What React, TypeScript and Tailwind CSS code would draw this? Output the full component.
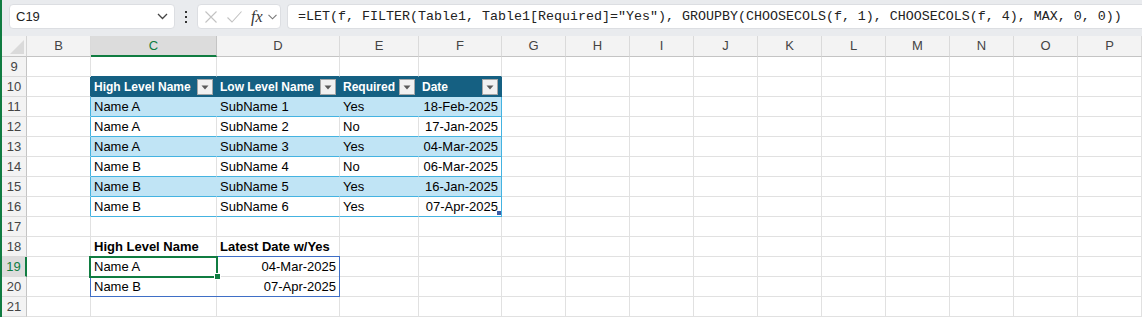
import React from 'react';

const FONT = { fontFamily: '"Liberation Sans", Arial, sans-serif' };

const COLS = [
  { id: 'B', w: 'w-[64px]' },
  { id: 'C', w: 'w-[126px]' },
  { id: 'D', w: 'w-[123px]' },
  { id: 'E', w: 'w-[79px]' },
  { id: 'F', w: 'w-[83px]' },
  { id: 'G', w: 'w-[64px]' },
  { id: 'H', w: 'w-[64px]' },
  { id: 'I', w: 'w-[64px]' },
  { id: 'J', w: 'w-[64px]' },
  { id: 'K', w: 'w-[64px]' },
  { id: 'L', w: 'w-[64px]' },
  { id: 'M', w: 'w-[64px]' },
  { id: 'N', w: 'w-[64px]' },
  { id: 'O', w: 'w-[64px]' },
  { id: 'P', w: 'w-[64px]' },
];

const TABLE_COLS = ['C', 'D', 'E', 'F'];
const HEADERS = ['High Level Name', 'Low Level Name', 'Required', 'Date'];
const DATA = [
  ['Name A', 'SubName 1', 'Yes', '18-Feb-2025'],
  ['Name A', 'SubName 2', 'No', '17-Jan-2025'],
  ['Name A', 'SubName 3', 'Yes', '04-Mar-2025'],
  ['Name B', 'SubName 4', 'No', '06-Mar-2025'],
  ['Name B', 'SubName 5', 'Yes', '16-Jan-2025'],
  ['Name B', 'SubName 6', 'Yes', '07-Apr-2025'],
];
const ROWS = [9, 10, 11, 12, 13, 14, 15, 16, 17, 18, 19, 20, 21];

type Cell = { text?: string; right?: boolean; bold?: boolean; dropdown?: boolean; cls: string };

const DropButton = () => (
  <div className="w-[16px] h-[16px] shrink-0 bg-[#f1f1f1] border border-[#a6a6a6] flex items-center justify-center">
    <svg width="8" height="5" viewBox="0 0 8 5">
      <path d="M0.5 0.5 H7.5 L4 4.5 Z" fill="#5a5a5a" />
    </svg>
  </div>
);

function getCell(r: number, c: string): Cell {
  const ti = TABLE_COLS.indexOf(c);
  const grid = 'border-r-[#e1e1e1] border-b-[#e1e1e1]';
  if (c === 'B') {
    if (r === 10) return { cls: 'border-r-[#156082] border-b-[#e1e1e1]' };
    if (r >= 11 && r <= 16) return { cls: 'border-r-[#44b3e1] border-b-[#e1e1e1]' };
    return { cls: grid };
  }
  if (ti >= 0) {
    if (r === 9) return { cls: 'border-r-[#e1e1e1] border-b-[#156082]' };
    if (r === 10)
      return {
        text: HEADERS[ti],
        bold: true,
        dropdown: true,
        cls: 'bg-[#156082] text-white border-r-[#156082] border-b-[#156082] pr-[1px]',
      };
    if (r >= 11 && r <= 16) {
      const band = (r - 11) % 2 === 0;
      const last = c === 'F';
      const rightCls = last ? 'border-r-[#44b3e1]' : band ? 'border-r-[#c0e4f5]' : 'border-r-[#e1e1e1]';
      return {
        text: DATA[r - 11][ti],
        right: c === 'F',
        cls: `${band ? 'bg-[#c0e4f5]' : 'bg-white'} ${rightCls} border-b-[#44b3e1]`,
      };
    }
    if (r === 18 && c === 'C') return { text: 'High Level Name', bold: true, cls: grid };
    if (r === 18 && c === 'D') return { text: 'Latest Date w/Yes', bold: true, cls: grid };
    if (r === 19 && c === 'C') return { text: 'Name A', cls: grid };
    if (r === 19 && c === 'D') return { text: '04-Mar-2025', right: true, cls: grid };
    if (r === 20 && c === 'C') return { text: 'Name B', cls: grid };
    if (r === 20 && c === 'D') return { text: '07-Apr-2025', right: true, cls: grid };
  }
  return { cls: grid };
}

const FormulaBar = () => (
  <div className="h-[36px] bg-[#e9ebee] flex items-start pt-[4px]">
    {/* Name box */}
    <div className="ml-[7px] w-[166px] h-[25px] bg-white rounded-[4px] border border-[#dcdee2] flex items-center justify-between pl-[6px] pr-[6px]">
      <span className="text-[13px] text-[#222]">C19</span>
      <svg width="11" height="7" viewBox="0 0 11 7">
        <path d="M1 1 L5.5 5.5 L10 1" fill="none" stroke="#444" strokeWidth="1.3" />
      </svg>
    </div>
    <div className="w-[22px] h-[25px] flex flex-col items-center justify-center gap-[3px]">
      <div className="w-[2px] h-[2px] bg-[#333]" />
      <div className="w-[2px] h-[2px] bg-[#333]" />
      <div className="w-[2px] h-[2px] bg-[#333]" />
    </div>
    {/* Function buttons */}
    <div className="w-[84px] h-[25px] bg-white rounded-[4px] border border-[#dcdee2] flex items-center pl-[6px]">
      <svg width="12" height="12" viewBox="0 0 12 12" className="ml-[1px]">
        <path d="M0.5 0.5 L11.5 11.5 M11.5 0.5 L0.5 11.5" stroke="#c2c2c2" strokeWidth="1.1" />
      </svg>
      <svg width="15" height="12" viewBox="0 0 15 12" className="ml-[10px]">
        <path d="M0.5 6.5 L5 11 L14.5 0.5" fill="none" stroke="#c2c2c2" strokeWidth="1.1" />
      </svg>
      <span
        className="ml-[9px] text-[16px] italic text-[#333] leading-none"
        style={{ fontFamily: '"Liberation Serif", "Times New Roman", serif' }}
      >
        fx
      </span>
      <svg width="9" height="6" viewBox="0 0 9 6" className="ml-[5px]">
        <path d="M0.5 0.8 L4.5 4.8 L8.5 0.8" fill="none" stroke="#777" strokeWidth="1.1" />
      </svg>
    </div>
    {/* Formula */}
    <div className="ml-[6px] flex-1 h-[25px] bg-white rounded-l-[4px] border border-r-0 border-[#dcdee2] flex items-center pl-[10px]">
      <span
        className="text-[13.33px] text-[#222] whitespace-pre"
        style={{ fontFamily: '"Liberation Mono", "Courier New", monospace' }}
      >
        =LET(f, FILTER(Table1, Table1[Required]="Yes"), GROUPBY(CHOOSECOLS(f, 1), CHOOSECOLS(f, 4), MAX, 0, 0))
      </span>
    </div>
  </div>
);

const ColumnHeaders = () => (
  <div className="flex h-[21px] bg-[#f3f3f3]">
    <div className="w-[25px] shrink-0 h-[21px] border-r border-b border-r-[#d4d4d4] border-b-[#c4c4c4] relative">
      <svg width="14" height="14" viewBox="0 0 14 14" className="absolute right-[2px] bottom-[2px]">
        <path d="M14 0 L14 14 L0 14 Z" fill="#dadada" />
      </svg>
    </div>
    {COLS.map((col) => {
      const sel = col.id === 'C';
      return (
        <div
          key={col.id}
          className={`${col.w} shrink-0 h-[21px] flex items-center justify-center text-[13px] border-r ${
            sel
              ? 'bg-[#dcdcdc] text-[#107c41] border-b-2 border-b-[#107c41] border-r-[#c4c4c4]'
              : 'text-[#444] border-b border-b-[#c4c4c4] border-r-[#dadada]'
          }`}
        >
          {col.id}
        </div>
      );
    })}
  </div>
);

const SheetRow = ({ r }: { r: number }) => {
  const sel = r === 19;
  return (
    <div className="flex h-[20px]">
      <div
        className={`w-[25px] shrink-0 h-[20px] flex items-center justify-center text-[13px] border-b border-b-[#dadada] ${
          sel ? 'bg-[#dcdcdc] text-[#107c41] border-r-2 border-r-[#107c41]' : 'bg-[#f3f3f3] text-[#444] border-r border-r-[#c4c4c4]'
        }`}
      >
        {r}
      </div>
      {COLS.map((col) => {
        const cell = getCell(r, col.id);
        return (
          <div
            key={col.id}
            className={`${col.w} shrink-0 h-[20px] border-r border-b flex items-center overflow-hidden whitespace-nowrap pl-[3px] pr-[3px] pt-[1px] ${
              cell.dropdown ? 'justify-between text-[12px]' : cell.right ? 'justify-end text-[13px]' : 'justify-start text-[13px]'
            } ${cell.bold ? 'font-bold' : ''} ${cell.cls}`}
          >
            {cell.text && <span>{cell.text}</span>}
            {cell.dropdown && <DropButton />}
          </div>
        );
      })}
    </div>
  );
};

export default function App() {
  return (
    <div className="w-[1142px] h-[317px] overflow-hidden bg-white text-black border-l-2 border-l-[#107c41]" style={FONT}>
      <FormulaBar />
      <ColumnHeaders />
      <div className="relative">
        {ROWS.map((r) => (
          <SheetRow key={r} r={r} />
        ))}
        {/* table resize handle */}
        <div className="absolute left-[495px] top-[154px] w-[4px] h-[4px] bg-[#3a5da8]" />
        {/* spill range */}
        <div className="absolute left-[88px] top-[199px] w-[250px] h-[41px] border border-[#3f6fc6]" />
        {/* active cell */}
        <div className="absolute left-[87px] top-[199px] w-[129px] h-[22px] border-2 border-[#107c41]" />
        <div className="absolute left-[212px] top-[216px] w-[7px] h-[7px] bg-[#107c41] border border-white" />
      </div>
    </div>
  );
}
